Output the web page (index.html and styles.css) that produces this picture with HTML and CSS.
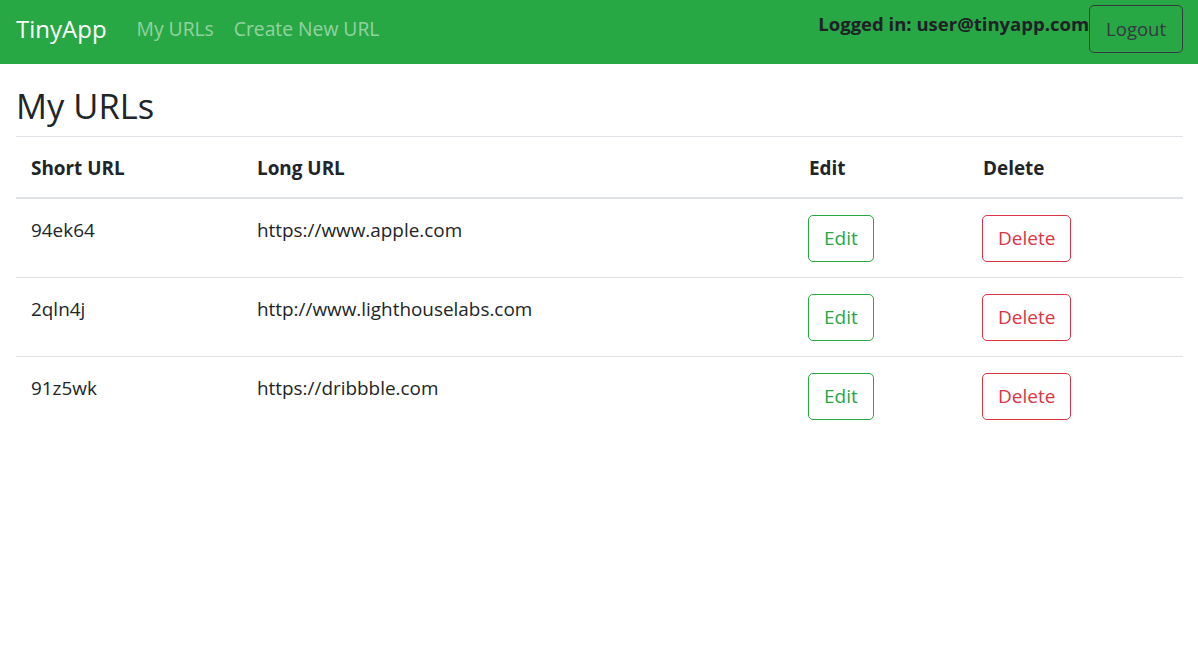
FILE: index.html
```html
<!DOCTYPE html>
<html lang="en">
<head>
<meta charset="utf-8">
<title>TinyApp</title>
<link rel="stylesheet" href="styles.css">
</head>
<body>
<nav class="navbar">
  <a class="brand" href="#">TinyApp</a>
  <ul class="nav-links">
    <li><a href="#">My URLs</a></li>
    <li><a href="#">Create New URL</a></li>
  </ul>
  <div class="user">
    <span class="logged">Logged in: user@tinyapp.com</span>
    <form class="logout-form"><button type="button" class="btn btn-dark-outline btn-logout">Logout</button></form>
  </div>
</nav>
<main class="container">
  <h3 class="title">My URLs</h3>
  <table class="table">
    <colgroup>
      <col class="c-short"><col class="c-long"><col class="c-edit"><col class="c-del">
    </colgroup>
    <thead>
      <tr><th>Short URL</th><th>Long URL</th><th>Edit</th><th>Delete</th></tr>
    </thead>
    <tbody>
      <tr>
        <td>94ek64</td><td>https://www.apple.com</td>
        <td><button type="button" class="btn btn-success-outline">Edit</button></td>
        <td><button type="button" class="btn btn-danger-outline">Delete</button></td>
      </tr>
      <tr>
        <td>2qln4j</td><td>http://www.lighthouselabs.com</td>
        <td><button type="button" class="btn btn-success-outline">Edit</button></td>
        <td><button type="button" class="btn btn-danger-outline">Delete</button></td>
      </tr>
      <tr>
        <td>91z5wk</td><td>https://dribbble.com</td>
        <td><button type="button" class="btn btn-success-outline">Edit</button></td>
        <td><button type="button" class="btn btn-danger-outline">Delete</button></td>
      </tr>
    </tbody>
  </table>
</main>
</body>
</html>
```
FILE: styles.css
```css
* { box-sizing: border-box; }
html, body { margin: 0; padding: 0; background: #fff; }
body {
  font-family: "Open Sans", "Noto Sans", "Liberation Sans", sans-serif;
  font-size: 18.9px;
  line-height: 30px;
  color: #212529;
}
a { text-decoration: none; }

.navbar {
  display: flex;
  align-items: center;
  height: 64px;
  padding: 5px 15px 11px 16px;
  background: #28a745;
}
.brand {
  font-size: 24px;
  line-height: 30px;
  color: #fff;
  margin-right: 20px;
}
.nav-links {
  display: flex;
  list-style: none;
  margin: 0;
  padding: 0;
}
.nav-links a {
  display: block;
  padding: 0 10px;
  font-size: 19.3px;
  color: rgba(255, 255, 255, 0.5);
}
.user {
  margin-left: auto;
  display: flex;
  align-items: flex-start;
}
.logged {
  font-weight: 700;
  font-size: 18.5px;
  line-height: 30px;
  margin-top: 4px;
  color: #1e2226;
}
.logout-form { margin: 0; }

.btn {
  font-family: inherit;
  font-size: 19px;
  line-height: 29px;
  padding: 8px 15px;
  border-radius: 5px;
  background: transparent;
  border: 1px solid;
  cursor: pointer;
}
.btn-logout {
  font-size: 18.5px;
  line-height: 30px;
  padding: 8px 16px;
}
.btn-dark-outline { color: #343a40; border-color: #343a40; }
.btn-success-outline { color: #28a745; border-color: #28a745; margin-left: -1px; }
.btn-danger-outline { color: #dc3545; border-color: #dc3545; margin-left: -1px; }

.container {
  padding: 20px 15px 0 16px;
}
.title {
  margin: 1px 0 9px;
  font-size: 34.5px;
  line-height: 42px;
  font-weight: 500;
  color: #212529;
}
.table {
  width: 100%;
  border-collapse: collapse;
  table-layout: fixed;
}
.c-short { width: 226px; }
.c-long { width: 552px; }
.c-edit { width: 174px; }
.c-del { width: auto; }
.table th, .table td {
  text-align: left;
  vertical-align: top;
  padding: 15px 15px;
  border-top: 1px solid #dee2e6;
}
.table th {
  font-weight: 700;
  padding-top: 16px;
  padding-bottom: 14px;
  border-bottom: 2px solid #dee2e6;
}
.table td { padding-top: 16px; padding-bottom: 15px; }
```
